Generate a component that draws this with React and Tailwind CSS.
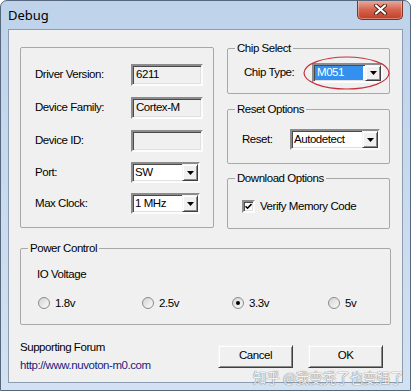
import React from 'react';

const sunken =
  'border-2 border-t-[#8c8c8c] border-l-[#8c8c8c] border-b-[#fcfcfc] border-r-[#fcfcfc] shadow-[inset_1px_1px_0_#4a4a4a,inset_-1px_-1px_0_#e0e0e0]';
const raised =
  'border border-t-[#f4f4f4] border-l-[#f4f4f4] border-b-[#3f3f3f] border-r-[#3f3f3f] shadow-[inset_1px_1px_0_#ffffff,inset_-1px_-1px_0_#8a8a8a]';

const Arrow = () => (
  <div className={`${raised} w-[16px] h-full flex items-center justify-center bg-[#f0f0f0]`}>
    <svg width="7" height="4" viewBox="0 0 7 4">
      <path d="M0 0h7L3.5 4z" fill="#000" />
    </svg>
  </div>
);

const Combo = ({ value, className, selected }) => (
  <div className={`${sunken} bg-white flex items-stretch ${className}`}>
    <div
      className={`flex-1 flex items-center pl-[2px] ${selected ? 'bg-[#3390ee] text-white my-[1px] ml-[1px] mr-[2px]' : ''}`}
    >
      {value}
    </div>
    <Arrow />
  </div>
);

const ReadOnly = ({ children }) => (
  <div className={`${sunken} bg-[#f0f0f0] w-[72px] h-[22px] pl-[3px] leading-[16px]`}>{children}</div>
);

const Group = ({ title, className, children }) => (
  <div className={`border border-[#a8a8a8] rounded-[2px] ${className}`}>
    {title && <div className="-mt-[8px] ml-[7px] w-fit px-[2px] bg-[#f0f0f0] leading-[14px]">{title}</div>}
    {children}
  </div>
);

const Row = ({ label, className, children }) => (
  <div className={`flex items-center ${className}`}>
    <span className="w-[96px]">{label}</span>
    {children}
  </div>
);

const Radio = ({ label, checked }) => (
  <div className="flex items-center gap-[5px]">
    <div className="w-[12px] h-[12px] rounded-full border border-[#8a8a8a] bg-gradient-to-br from-[#d4d4d4] to-[#fbfbfb] flex items-center justify-center">
      {checked && <div className="w-[4px] h-[4px] rounded-full bg-black" />}
    </div>
    <span className="leading-[14px]">{label}</span>
  </div>
);

const Button = ({ children }) => (
  <button className={`${raised} w-[75px] h-[23px] bg-[#f0f0f0] flex items-center justify-center`}>{children}</button>
);

const App = () => {
  return (
    <div className="w-[411px] h-[391px] relative flex flex-col border border-[#56677d] rounded-t-[7px] bg-gradient-to-b from-[#bed3ea] to-[#d3e2f1] font-['Liberation_Sans',Arial,sans-serif] text-[11.5px] tracking-[-0.45px] text-black overflow-hidden">
      {/* title bar */}
      <div className="h-[28px] flex justify-between shrink-0">
        <div className="pl-[7px] pt-[5px] font-['Noto_Sans',sans-serif] text-[13px] tracking-normal leading-[18px]">Debug</div>
        <div className="w-[46px] h-[20px] mr-[7px] -mt-px rounded-b-[5px] border border-t-0 border-[#7a3324] bg-gradient-to-b from-[#eab0a2] via-[#d5644f] to-[#c23d24] flex items-center justify-center shadow-[inset_0_0_0_1px_rgba(255,255,255,0.35)]">
          <svg width="13" height="11" viewBox="0 0 13 11">
            <path d="M2 1.5l9 8M11 1.5l-9 8" stroke="#4a1e14" strokeWidth="4" strokeLinecap="round" />
            <path d="M2 1.5l9 8M11 1.5l-9 8" stroke="#fff" strokeWidth="2.2" strokeLinecap="round" />
          </svg>
        </div>
      </div>

      {/* client area */}
      <div className="flex-1 mx-[7px] mb-[7px] bg-[#f0f0f0] border border-[#8d9db1] flex flex-col">
        <div className="flex mt-[17px] ml-[11px] gap-[13px]">
          <Group className="w-[194px] h-[181px] pt-[16px] pl-[14px] flex flex-col">
            <Row label="Driver Version:">
              <ReadOnly>6211</ReadOnly>
            </Row>
            <Row label="Device Family:" className="mt-[11px]">
              <ReadOnly>Cortex-M</ReadOnly>
            </Row>
            <Row label="Device ID:" className="mt-[11px]">
              <ReadOnly />
            </Row>
            <Row label="Port:" className="mt-[10px]">
              <Combo value="SW" className="w-[69px] h-[21px]" />
            </Row>
            <Row label="Max Clock:" className="mt-[10px]">
              <Combo value="1 MHz" className="w-[69px] h-[21px]" />
            </Row>
          </Group>

          <div className="w-[163px] mt-[1px] flex flex-col">
            <Group title="Chip Select" className="h-[46px] relative">
              <div className="flex items-center mt-[8px] pl-[16px]">
                <span className="w-[68px]">Chip Type:</span>
                <Combo value="M051" selected className="w-[71px] h-[20px]" />
              </div>
              <svg className="absolute left-[75px] top-[7px]" width="87" height="34" viewBox="0 0 87 34">
                <ellipse cx="43.5" cy="17" rx="42.5" ry="16" fill="none" stroke="#c8323c" strokeWidth="1.2" />
              </svg>
            </Group>
            <Group title="Reset Options" className="h-[55px] mt-[15px]">
              <div className="flex items-center mt-[13px] pl-[14px]">
                <span className="w-[48px]">Reset:</span>
                <Combo value="Autodetect" className="w-[90px] h-[21px]" />
              </div>
            </Group>
            <Group title="Download Options" className="h-[51px] mt-[14px]">
              <div className="flex items-center mt-[13px] pl-[14px] gap-[5px]">
                <div className={`${sunken} w-[13px] h-[13px] bg-white flex items-center justify-center`}>
                  <svg width="7" height="7" viewBox="0 0 7 7">
                    <path d="M0.5 3.2l2 2 4-4.2" stroke="#000" strokeWidth="1.6" fill="none" />
                  </svg>
                </div>
                <span>Verify Memory Code</span>
              </div>
            </Group>
          </div>
        </div>

        <Group title="Power Control" className="w-[371px] h-[77px] ml-[11px] mt-[19px]">
          <div className="mt-[12px] pl-[16px] leading-[14px]">IO Voltage</div>
          <div className="grid grid-cols-[104px_90px_96px_auto] mt-[15px] pl-[17px]">
            <Radio label="1.8v" />
            <Radio label="2.5v" />
            <Radio label="3.3v" checked />
            <Radio label="5v" />
          </div>
        </Group>

        <div className="flex items-center mt-[13px] ml-[11px] mr-[19px]">
          <div className="flex flex-col">
            <span className="leading-[18px]">Supporting Forum</span>
            <span className="leading-[18px] text-[#1a237e]">http://www.nuvoton-m0.com</span>
          </div>
          <div className="ml-auto flex gap-[15px]">
            <Button>Cancel</Button>
            <Button>OK</Button>
          </div>
        </div>
      </div>

      <div className="absolute left-[252px] top-[366px] font-['Noto_Sans_CJK_SC',sans-serif] text-[13.5px] tracking-normal text-[#f4f4f4] opacity-90 [text-shadow:0_0_1px_#6f6f6f,0_0_1px_#6f6f6f]">
        知乎 @我变秃了也变强了
      </div>
    </div>
  );
};

export default App;
